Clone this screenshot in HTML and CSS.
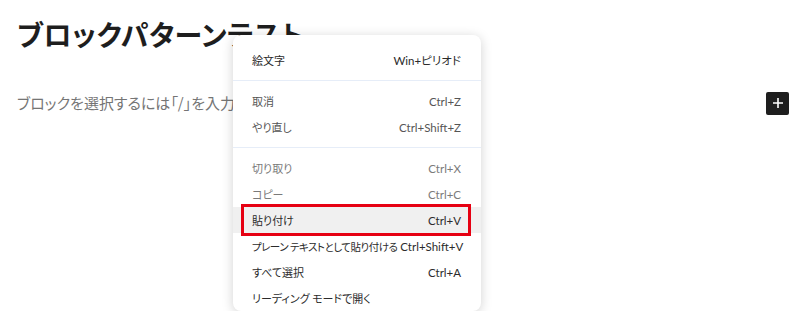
FILE: index.html
```html
<!DOCTYPE html>
<html lang="ja">
<head>
<meta charset="utf-8">
<link rel="stylesheet" href="styles.css">
</head>
<body>
<div class="editor">
  <h1 class="title">ブロックパターンテスト</h1>
  <div class="block-row">
    <p class="placeholder">ブロックを選択するには「/」を入力</p>
    <button class="add-btn" aria-label="追加">
      <svg width="12" height="12" viewBox="0 0 12 12"><path d="M6 1v10M1 6h10" stroke="#fff" stroke-width="1.6"/></svg>
    </button>
  </div>
</div>
<div class="menu">
  <div class="item"><span>絵文字</span><span class="key">Win+ピリオド</span></div>
  <div class="sep"></div>
  <div class="item dim"><span>取消</span><span class="key">Ctrl+Z</span></div>
  <div class="item dim"><span>やり直し</span><span class="key">Ctrl+Shift+Z</span></div>
  <div class="sep"></div>
  <div class="item off"><span>切り取り</span><span class="key">Ctrl+X</span></div>
  <div class="item off"><span>コピー</span><span class="key">Ctrl+C</span></div>
  <div class="item hover"><span>貼り付け</span><span class="key">Ctrl+V</span><span class="mark"></span></div>
  <div class="item"><span class="long">プレーン テキストとして貼り付ける</span><span class="key">Ctrl+Shift+V</span></div>
  <div class="item"><span>すべて選択</span><span class="key">Ctrl+A</span></div>
  <div class="item"><span>リーディング モードで開く</span><span class="key"></span></div>
</div>
</body>
</html>
```
FILE: styles.css
```css
html, body {
  margin: 0;
  background: #fff;
  overflow: hidden;
  height: 311px;
}
body {
  font-family: "Noto Sans CJK JP", "Noto Sans", sans-serif;
  color: #1e1e1e;
  position: relative;
}
.editor {
  padding: 14px 11px 0 17px;
}
.title {
  margin: 0;
  font-size: 28px;
  font-weight: 700;
  line-height: 40px;
  font-feature-settings: "palt";
  letter-spacing: 0.5px;
}
.block-row {
  display: flex;
  justify-content: space-between;
  align-items: center;
  margin-top: 37px;
}
.placeholder {
  margin: 0;
  font-size: 15px;
  line-height: 24px;
  color: #757575;
  font-feature-settings: "palt";
}
.add-btn {
  width: 23px;
  height: 23px;
  border: 0;
  border-radius: 2px;
  background: #1e1e1e;
  padding: 0;
  display: flex;
  align-items: center;
  justify-content: center;
}
.menu {
  position: absolute;
  left: 233px;
  top: 35px;
  width: 248px;
  padding-top: 12px;
  background: #fff;
  border-radius: 8px;
  box-shadow: 0 2px 12px rgba(0,0,0,0.18);
  font-size: 11px;
  color: #2b2b2b;
  font-feature-settings: "palt";
}
.item {
  position: relative;
  display: flex;
  justify-content: space-between;
  align-items: center;
  gap: 3px;
  height: 26px;
  padding: 0 20px 0 19px;
  white-space: nowrap;
}
.long {
  font-size: 10.5px;
  letter-spacing: -0.5px;
}
.key {
  font-family: "Lato", "Noto Sans CJK JP", sans-serif;
  font-size: 11.5px;
}
.dim { color: #555; }
.off { color: #7a7a7a; }
.hover { background: #f0f0f0; }
.mark {
  position: absolute;
  left: 8px;
  right: 10px;
  top: -3px;
  bottom: -3px;
  border: 3px solid #e60012;
}
.sep {
  height: 1px;
  background: #e6edf8;
  margin: 7px 0;
}
```
